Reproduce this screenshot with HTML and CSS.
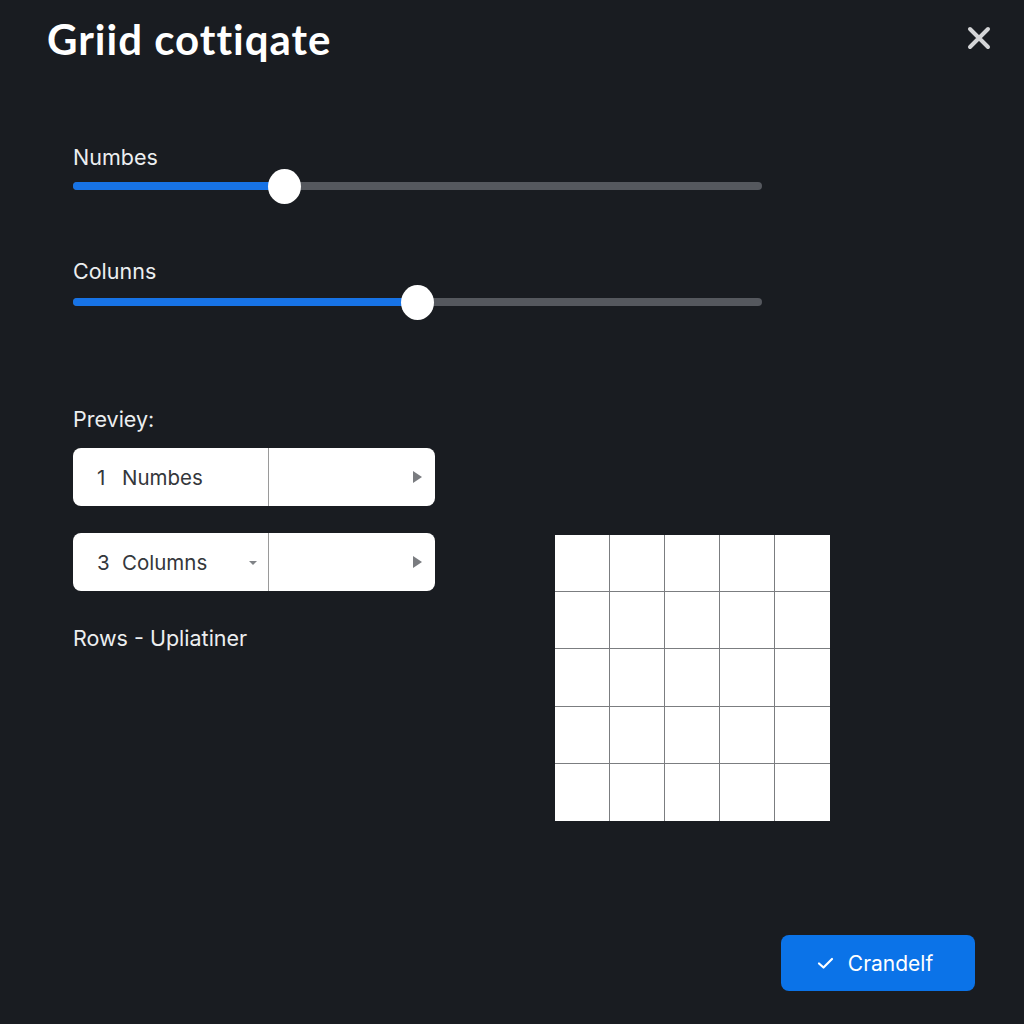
FILE: index.html
```html
<!DOCTYPE html>
<html>
<head>
<meta charset="utf-8">
<link rel="stylesheet" href="styles.css">
</head>
<body>
<div class="dialog">
  <header class="header">
    <h1 class="title">Griid cottiqate</h1>
    <button class="close" aria-label="Close">
      <svg width="24" height="24" viewBox="0 0 24 24"><path d="M3 3 L21 21 M21 3 L3 21" stroke="#d4d5d7" stroke-width="4" stroke-linecap="round"/></svg>
    </button>
  </header>

  <section class="sliders">
    <div class="field">
      <div class="label">Numbes</div>
      <div class="slider">
        <div class="track"></div>
        <div class="fill" style="width: 211px"></div>
        <div class="thumb" style="left: 211px"></div>
      </div>
    </div>
    <div class="field field-2">
      <div class="label">Colunns</div>
      <div class="slider">
        <div class="track"></div>
        <div class="fill" style="width: 344px"></div>
        <div class="thumb" style="left: 344px"></div>
      </div>
    </div>
  </section>

  <section class="preview">
    <div class="preview-left">
      <div class="label">Previey:</div>
      <div class="select select-1">
        <div class="select-main"><span class="num">1</span><span>Numbes</span></div>
        <div class="select-side"><span class="arrow"></span></div>
      </div>
      <div class="select select-2">
        <div class="select-main"><span class="num">3</span><span>Columns</span><span class="caret"></span></div>
        <div class="select-side"><span class="arrow"></span></div>
      </div>
      <div class="label rows">Rows - Upliatiner</div>
    </div>
    <div class="grid">
      <div></div><div></div><div></div><div></div><div></div>
      <div></div><div></div><div></div><div></div><div></div>
      <div></div><div></div><div></div><div></div><div></div>
      <div></div><div></div><div></div><div></div><div></div>
      <div></div><div></div><div></div><div></div><div></div>
    </div>
  </section>

  <footer class="footer">
    <button class="primary">
      <svg width="18" height="14" viewBox="0 0 18 14"><path d="M2 7.5 L6.5 11.5 L15 3" fill="none" stroke="#ffffff" stroke-width="2.2" stroke-linecap="round" stroke-linejoin="round"/></svg>
      <span>Crandelf</span>
    </button>
  </footer>
</div>
</body>
</html>
```

FILE: styles.css
```css
html, body {
  margin: 0;
  padding: 0;
  background: #191c21;
}

body {
  font-family: Inter, "Liberation Sans", Arial, sans-serif;
  color: #eceef0;
}

.dialog {
  height: 1024px;
  display: flex;
  flex-direction: column;
  box-sizing: border-box;
}

.header {
  display: flex;
  justify-content: space-between;
  align-items: center;
  padding: 16px 29px 0 47px;
  height: 50px;
}

.title {
  margin: -4px 0 0 0;
  font-family: Lato, "Open Sans", "Liberation Sans", sans-serif;
  font-weight: 700;
  font-size: 42px;
  line-height: 48px;
  letter-spacing: 1px;
  font-variant-ligatures: none;
  font-feature-settings: "liga" 0, "dlig" 0;
  color: #ffffff;
}

.close {
  background: none;
  border: 0;
  padding: 0;
  width: 32px;
  height: 32px;
  display: flex;
  align-items: center;
  justify-content: center;
  margin-top: -7px;
}

.sliders {
  padding-left: 73px;
  margin-top: 79px;
  width: 689px;
}

.label {
  font-size: 21.5px;
  line-height: 24px;
  color: #eceef0;
}

.field-2 {
  margin-top: 56px;
}

.field-2 .slider {
  margin-top: 2px;
}

.slider {
  position: relative;
  height: 34px;
}

.track {
  position: absolute;
  left: 0;
  right: 0;
  top: 13px;
  height: 8px;
  border-radius: 4px;
  background: #55585e;
}

.fill {
  position: absolute;
  left: 0;
  top: 13px;
  height: 8px;
  border-radius: 4px;
  background: #1773e6;
}

.thumb {
  position: absolute;
  top: 0;
  width: 33px;
  height: 35px;
  margin-left: -16px;
  border-radius: 50%;
  background: #ffffff;
}

.preview {
  display: flex;
  padding-left: 73px;
  margin-top: 88px;
  gap: 120px;
}

.preview-left {
  width: 362px;
}

.select {
  display: flex;
  height: 58px;
  background: #ffffff;
  border-radius: 8px;
  color: #34373b;
  font-size: 20.5px;
}

.select-1 {
  margin-top: 17px;
}

.select-2 {
  margin-top: 27px;
}

.select-main {
  position: relative;
  box-sizing: border-box;
  width: 196px;
  display: flex;
  align-items: center;
  padding-left: 24px;
  gap: 14px;
  border-right: 1.5px solid #9a9a9a;
}

.num {
  display: inline-block;
  width: 11px;
}

.caret {
  position: absolute;
  right: 11px;
  top: 28px;
  width: 0;
  height: 0;
  border-left: 4px solid transparent;
  border-right: 4px solid transparent;
  border-top: 4px solid #808387;
}

.select-side {
  flex: 1;
  display: flex;
  align-items: center;
  justify-content: flex-end;
  padding-right: 13px;
}

.arrow {
  width: 0;
  height: 0;
  border-top: 6px solid transparent;
  border-bottom: 6px solid transparent;
  border-left: 9px solid #7a7c80;
}

.rows {
  margin-top: 35px;
}

.grid {
  margin-top: 128px;
  width: 275px;
  height: 286px;
  display: grid;
  grid-template-columns: repeat(5, 1fr);
  grid-template-rows: repeat(5, 1fr);
  background: #ffffff;
}

.grid div {
  border-right: 1px solid #7b7d80;
  border-bottom: 1px solid #7b7d80;
}

.grid div:nth-child(5n) {
  border-right: 0;
}

.grid div:nth-child(n+21) {
  border-bottom: 0;
}

.footer {
  margin-top: auto;
  display: flex;
  justify-content: flex-end;
  padding: 0 49px 33px 0;
}

.primary {
  width: 194px;
  height: 56px;
  border: 0;
  border-radius: 8px;
  background: #0b73e8;
  color: #ffffff;
  font-family: Inter, "Liberation Sans", sans-serif;
  font-size: 21px;
  display: flex;
  align-items: center;
  justify-content: center;
  gap: 13px;
  padding: 0 6px 0 0;
}
```
